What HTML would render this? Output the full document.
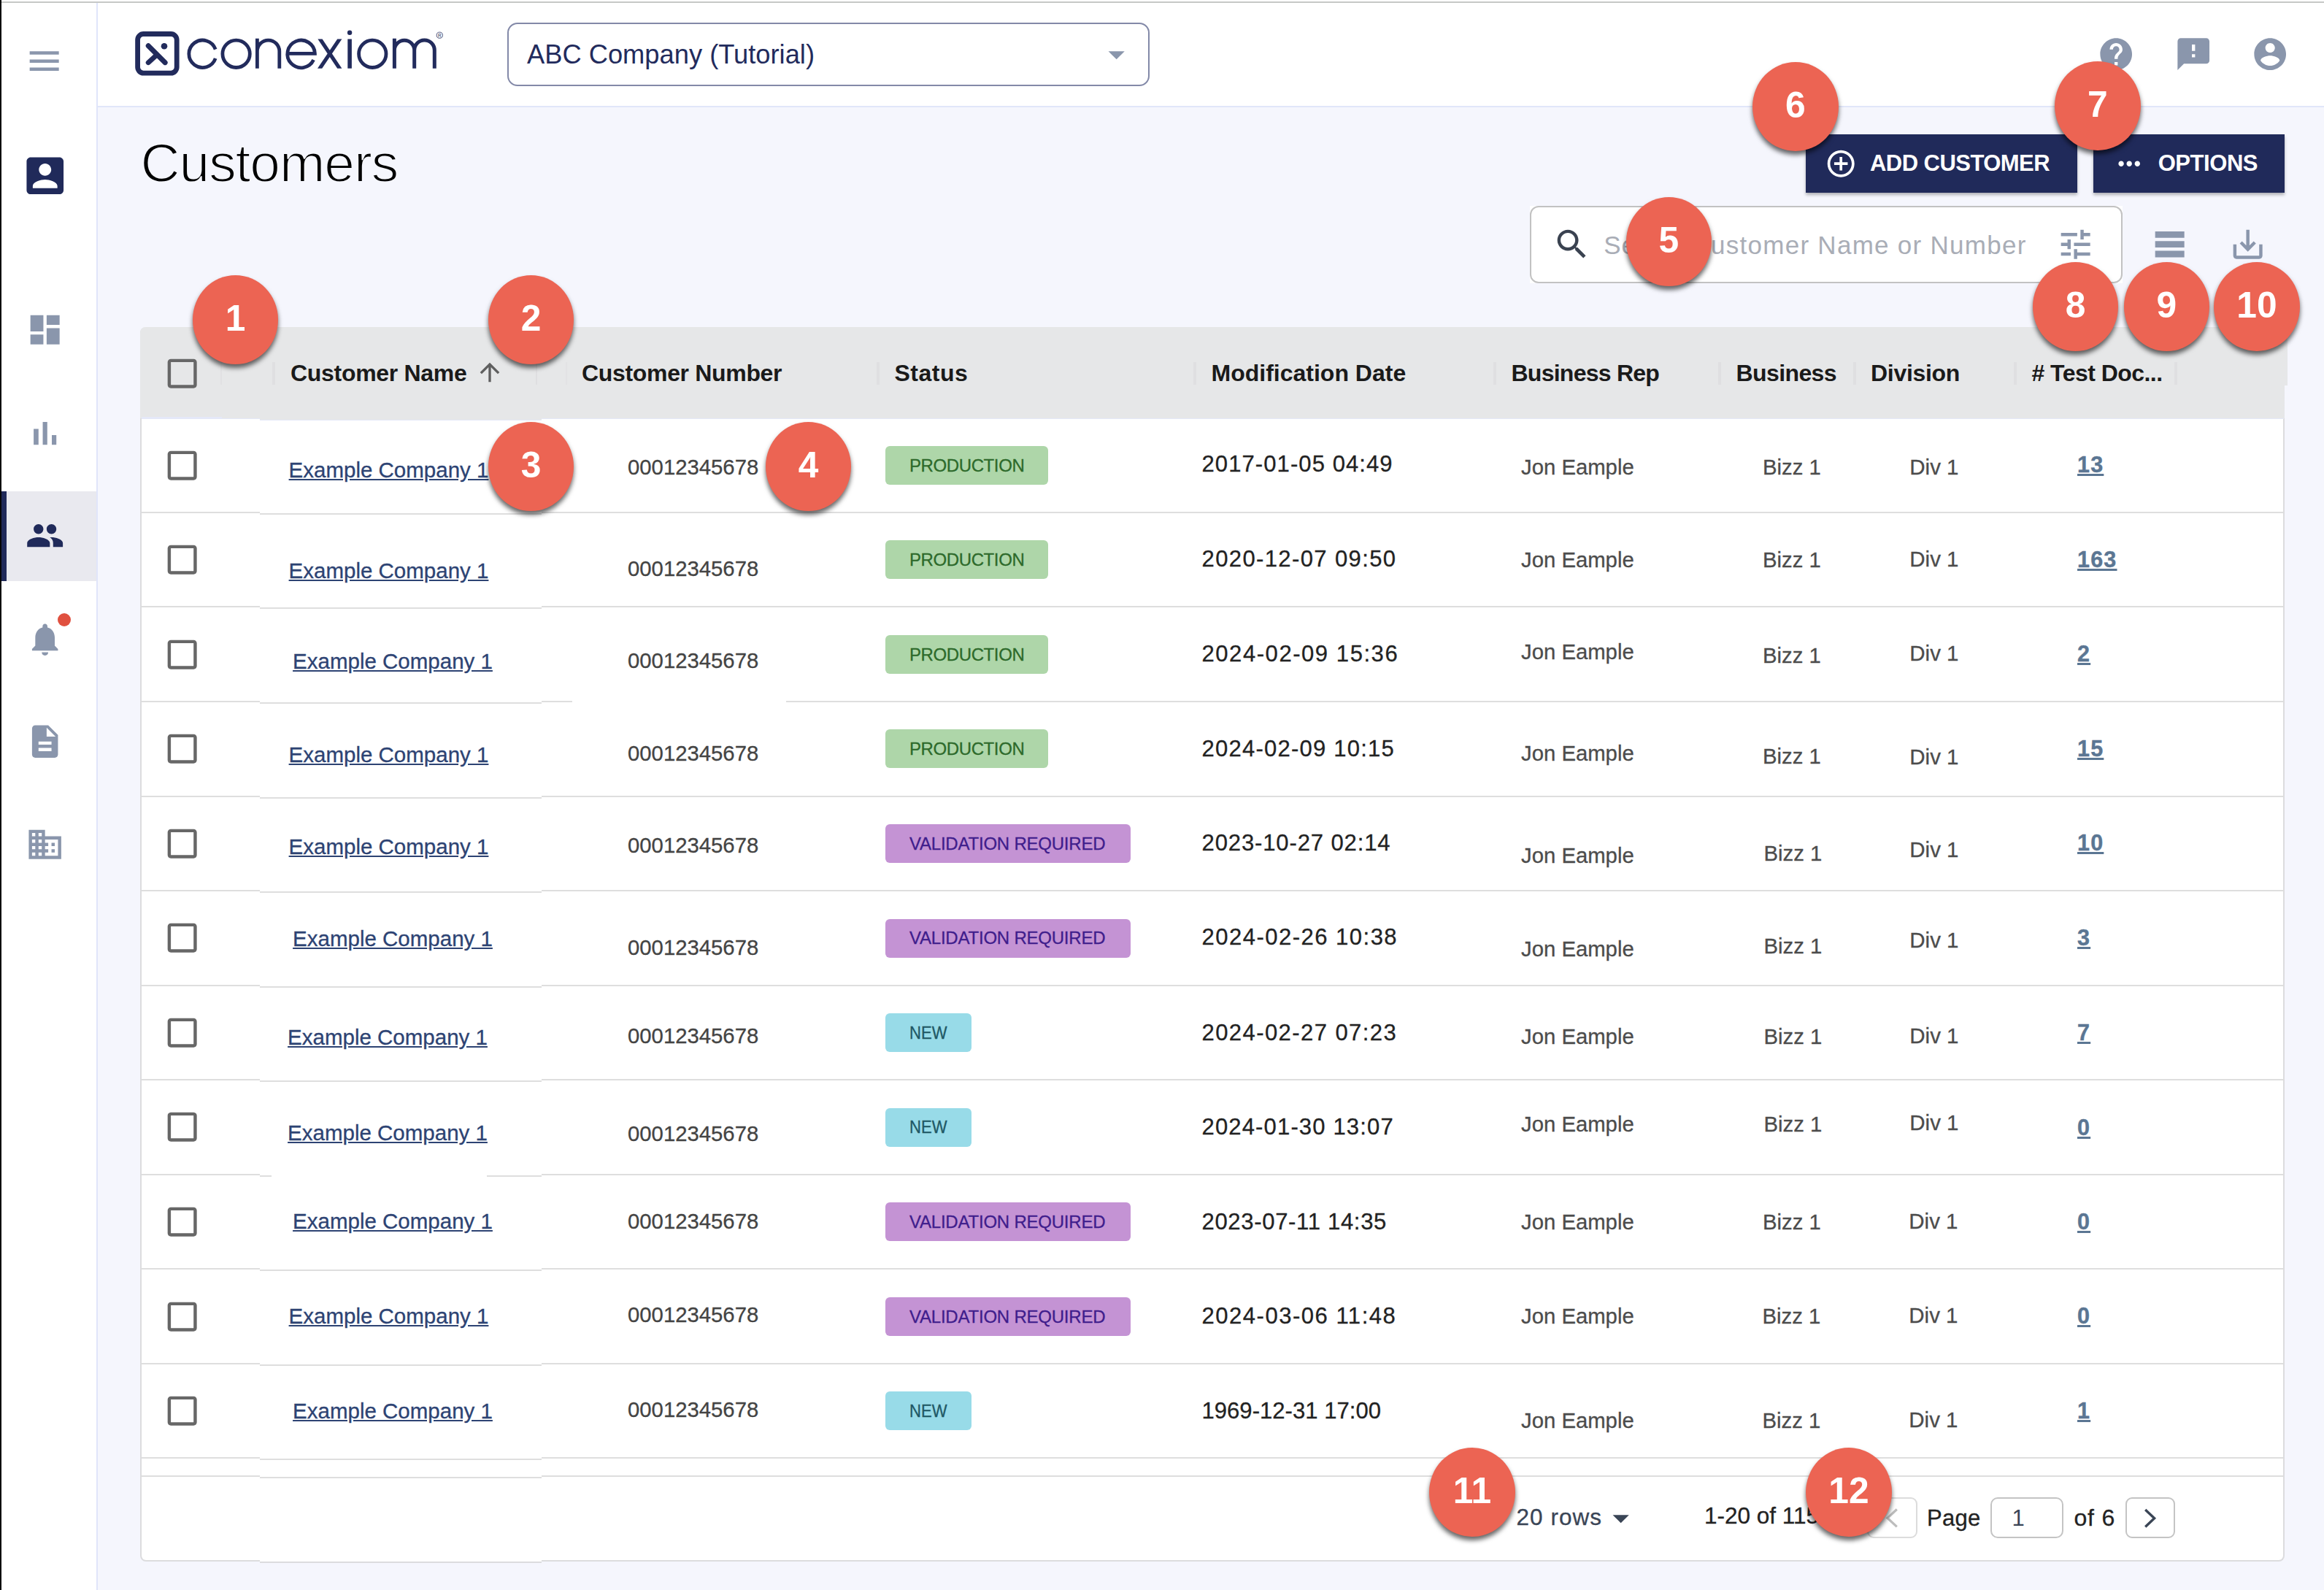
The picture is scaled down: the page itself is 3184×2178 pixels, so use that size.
<!DOCTYPE html>
<html><head><meta charset="utf-8"><title>Customers</title>
<style>
html,body{margin:0;padding:0}
body{width:3184px;height:2178px;position:relative;overflow:hidden;background:#f5f6fd;font-family:"Liberation Sans",sans-serif}
.a{position:absolute;display:block}
.t{position:absolute;white-space:nowrap;line-height:1}
.u{text-decoration:underline}
.c{position:absolute;width:117.6px;height:122px;border-radius:50%;background:#ec6453;box-shadow:0 5px 6px rgba(0,0,0,.6);color:#fff;font-weight:bold;font-size:49.7px;line-height:118px;text-align:center}
.bd{position:absolute;height:53px;border-radius:6px}
</style></head><body>

<div class="a" style="left:0.0px;top:0.0px;width:3184.0px;height:147.0px;background:#fff"></div>
<div class="a" style="left:134.0px;top:145.0px;width:3050.0px;height:2.0px;background:#e1e6f9"></div>
<div class="a" style="left:0.0px;top:0.0px;width:134.0px;height:2178.0px;background:#fff"></div>
<div class="a" style="left:132.1px;top:4.0px;width:1.8px;height:2174.0px;background:#e0e5fa"></div>
<div class="a" style="left:0.0px;top:2.1px;width:3184.0px;height:1.9px;background:#c6c8c6"></div>
<div class="a" style="left:0.0px;top:0.0px;width:2.0px;height:2178.0px;background:#050505"></div>
<svg class="a" style="left:34.3px;top:56.8px" width="53.33" height="53.33" viewBox="0 0 24 24"><path fill="#8a96ac" d="M3 18h18v-2H3v2zm0-5h18v-2H3v2zm0-7v2h18V6H3z"/></svg>
<svg class="a" style="left:27.7px;top:207.3px" width="67.5" height="67.5" viewBox="0 0 24 24"><path fill="#202a5a" d="M3 5v14c0 1.1.89 2 2 2h14c1.1 0 2-.9 2-2V5c0-1.1-.9-2-2-2H5c-1.11 0-2 .9-2 2zm12 4c0 1.66-1.34 3-3 3s-3-1.34-3-3 1.34-3 3-3 3 1.34 3 3zm-9 8c0-2 4-3.1 6-3.1s6 1.1 6 3.1v1H6v-1z"/></svg>
<svg class="a" style="left:34.5px;top:425.3px" width="53.33" height="53.33" viewBox="0 0 24 24"><path fill="#8a96ac" d="M3 13h8V3H3v10zm0 8h8v-6H3v6zm10 0h8V11h-8v10zm0-18v6h8V3h-8z"/></svg>
<svg class="a" style="left:34.7px;top:566.8px" width="53.33" height="53.33" viewBox="0 0 24 24"><path fill="#8a96ac" d="M5 9.2h3V19H5zM10.6 5h2.8v14h-2.8zm5.6 8H19v6h-2.8z"/></svg>
<div class="a" style="left:2.0px;top:673.0px;width:130.0px;height:123.0px;background:#e9e9ef"></div>
<div class="a" style="left:2.0px;top:673.0px;width:7.0px;height:123.0px;background:#202a5a"></div>
<svg class="a" style="left:34.6px;top:707.1px" width="53.33" height="53.33" viewBox="0 0 24 24"><path fill="#202a5a" d="M16 11c1.66 0 2.99-1.34 2.99-3S17.66 5 16 5c-1.66 0-3 1.34-3 3s1.34 3 3 3zm-8 0c1.66 0 2.99-1.34 2.99-3S9.66 5 8 5C6.34 5 5 6.34 5 8s1.34 3 3 3zm0 2c-2.33 0-7 1.17-7 3.5V19h14v-2.5c0-2.33-4.67-3.5-7-3.5zm8 0c-.29 0-.62.02-.97.05 1.16.84 1.97 1.97 1.97 3.45V19h6v-2.5c0-2.33-4.67-3.5-7-3.5z"/></svg>
<svg class="a" style="left:34.7px;top:849.0px" width="53.33" height="53.33" viewBox="0 0 24 24"><path fill="#8a96ac" d="M12 22c1.1 0 2-.9 2-2h-4c0 1.1.89 2 2 2zm6-6v-5c0-3.07-1.64-5.64-4.5-6.32V4c0-.83-.67-1.5-1.5-1.5s-1.5.67-1.5 1.5v.68C7.63 5.36 6 7.92 6 11v5l-2 2v1h16v-1l-2-2z"/></svg>
<div class="a" style="left:79.0px;top:840.0px;width:18.0px;height:18.0px;background:#e0503f;border-radius:50%"></div>
<svg class="a" style="left:34.9px;top:988.6px" width="53.33" height="53.33" viewBox="0 0 24 24"><path fill="#8a96ac" d="M14 2H6c-1.1 0-1.99.9-1.99 2L4 20c0 1.1.89 2 1.99 2H18c1.1 0 2-.9 2-2V8l-6-6zm2 16H8v-2h8v2zm0-4H8v-2h8v2zm-3-5V3.5L18.5 9H13z"/></svg>
<svg class="a" style="left:34.8px;top:1129.8px" width="53.33" height="53.33" viewBox="0 0 24 24"><path fill="#8a96ac" d="M12 7V3H2v18h20V7H12zM6 19H4v-2h2v2zm0-4H4v-2h2v2zm0-4H4V9h2v2zm0-4H4V5h2v2zm4 12H8v-2h2v2zm0-4H8v-2h2v2zm0-4H8V9h2v2zm0-4H8V5h2v2zm10 12h-8v-2h2v-2h-2v-2h2v-2h-2V9h8v10zm-2-8h-2v2h2v-2zm0 4h-2v2h2v-2z"/></svg>
<svg class="a" style="left:170px;top:25px" width="460" height="100" viewBox="170 25 460 100" fill="none" stroke="#222b5c">
<rect x="188.6" y="46.5" width="53.6" height="53.6" rx="8" stroke-width="6.8"/>
<path d="M203.2 62.7L226.2 85.7M203.2 85.7L213.6 76.3" stroke-width="6.9" stroke-linecap="round"/>
<circle cx="225" cy="63.3" r="4.3" fill="#222b5c" stroke="none"/>
<g stroke-width="4.8">
<path d="M295.2 67.6A18.7 18.7 0 1 0 295.2 80"/>
<circle cx="323.6" cy="73.8" r="18.7"/>
<path d="M352.4 93.7V52.7M352.4 70.3A15.2 15.2 0 0 1 382.8 70.3V93.7"/>
<path d="M393.8 73.3H431.4A18.8 18.8 0 1 0 429.6 82"/>
<path d="M435.4 53.5H441.6L468.4 93.7H462.2ZM462.2 53.5H468.4L441.2 93.7H435Z" fill="#222b5c" stroke="none"/>
<path d="M479.1 53.5V93.7" stroke-width="5.6"/>
<circle cx="510.3" cy="73.8" r="18.7"/>
<path d="M540.4 93.7V52.7M540.4 68.8A13.65 13.65 0 0 1 567.7 68.8V93.7M567.7 68.8A13.8 13.8 0 0 1 595.3 68.8V93.7" stroke-width="5"/>
</g>
<circle cx="479.1" cy="44.8" r="3.2" fill="#222b5c" stroke="none"/>
<circle cx="602.3" cy="48.2" r="4.1" stroke-width="0.8"/>
<text x="602.3" y="50.6" font-family="Liberation Sans" font-size="6.5" text-anchor="middle" fill="#222b5c" stroke="none">R</text>
</svg>
<div class="a" style="left:695.0px;top:31.0px;width:880.0px;height:87.0px;border:2px solid #8389a8;border-radius:14px;box-sizing:border-box;background:#fff"></div>
<div class="t " style="left:722.0px;top:56.8px;font-size:36.3px;color:#222b5c;font-weight:normal;">ABC Company (Tutorial)</div>
<svg class="a" style="left:1502.6px;top:47.8px" width="53.33" height="53.33" viewBox="0 0 24 24"><path fill="#8a96ac" d="M7 10l5 5 5-5z"/></svg>
<svg class="a" style="left:2873.3px;top:48.0px" width="52.4" height="52.4" viewBox="0 0 24 24"><path fill="#8a96ac" d="M12 2C6.48 2 2 6.48 2 12s4.48 10 10 10 10-4.48 10-10S17.52 2 12 2zm1 17h-2v-2h2v2zm2.07-7.75l-.9.92C13.45 12.9 13 13.5 13 15h-2v-.5c0-1.1.45-2.1 1.17-2.83l1.24-1.26c.37-.36.59-.86.59-1.41 0-1.1-.9-2-2-2s-2 .9-2 2H8c0-2.21 1.79-4 4-4s4 1.79 4 4c0 .88-.36 1.68-.93 2.25z"/></svg>
<svg class="a" style="left:2979.3px;top:48.0px" width="52.4" height="52.4" viewBox="0 0 24 24"><path fill="#8a96ac" d="M20 2H4c-1.1 0-1.99.9-1.99 2L2 22l4-4h14c1.1 0 2-.9 2-2V4c0-1.1-.9-2-2-2zm-7 12h-2v-2h2v2zm0-4h-2V6h2v4z"/></svg>
<svg class="a" style="left:3084.2px;top:48.0px" width="52.4" height="52.4" viewBox="0 0 24 24"><path fill="#8a96ac" d="M12 2C6.48 2 2 6.48 2 12s4.48 10 10 10 10-4.48 10-10S17.52 2 12 2zm0 3c1.66 0 3 1.34 3 3s-1.34 3-3 3-3-1.34-3-3 1.34-3 3-3zm0 14.2c-2.5 0-4.71-1.28-6-3.22.03-1.99 4-3.08 6-3.08 1.99 0 5.97 1.09 6 3.08-1.29 1.94-3.5 3.22-6 3.22z"/></svg>
<div class="t " style="left:192.5px;top:186.1px;font-size:75px;color:#000;font-weight:normal;letter-spacing:-1.1px;-webkit-text-stroke:1.9px #f5f6fd">Customers</div>
<div class="a" style="left:2474.0px;top:184.0px;width:372.0px;height:79.5px;background:#202a5a;box-shadow:0 3px 4px rgba(0,0,0,.28)"></div>
<svg class="a" style="left:2499.7px;top:202.2px" width="44.4" height="44.4" viewBox="0 0 24 24"><path fill="#fff" d="M13 7h-2v4H7v2h4v4h2v-4h4v-2h-4V7zm-1-5C6.48 2 2 6.48 2 12s4.48 10 10 10 10-4.48 10-10S17.52 2 12 2zm0 18c-4.41 0-8-3.59-8-8s3.59-8 8-8 8 3.59 8 8-3.59 8-8 8z"/></svg>
<div class="t " style="left:2562.0px;top:208.2px;font-size:31px;color:#fff;font-weight:bold;letter-spacing:-.55px">ADD CUSTOMER</div>
<div class="a" style="left:2868.0px;top:184.0px;width:262.0px;height:79.5px;background:#202a5a;box-shadow:0 3px 4px rgba(0,0,0,.28)"></div>
<svg class="a" style="left:2894.8px;top:202.1px" width="44.4" height="44.4" viewBox="0 0 24 24"><path fill="#fff" d="M6 10c-1.1 0-2 .9-2 2s.9 2 2 2 2-.9 2-2-.9-2-2-2zm12 0c-1.1 0-2 .9-2 2s.9 2 2 2 2-.9 2-2-.9-2-2-2zm-6 0c-1.1 0-2 .9-2 2s.9 2 2 2 2-.9 2-2-.9-2-2-2z"/></svg>
<div class="t " style="left:2956.7px;top:208.2px;font-size:31px;color:#fff;font-weight:bold;letter-spacing:-.45px">OPTIONS</div>
<div class="a" style="left:2096.0px;top:282.0px;width:811.5px;height:105.5px;background:#fff"></div>
<div class="a" style="left:2096.0px;top:282.0px;width:811.5px;height:105.5px;border:2px solid #c2c2c2;border-radius:12px;box-sizing:border-box"></div>
<svg class="a" style="left:2127.0px;top:307.8px" width="53.33" height="53.33" viewBox="0 0 24 24"><path fill="#3a4250" d="M15.5 14h-.79l-.28-.27C15.41 12.59 16 11.11 16 9.5 16 5.91 13.09 3 9.5 3S3 5.91 3 9.5 5.91 16 9.5 16c1.61 0 3.09-.59 4.23-1.57l.27.28v.79l5 4.99L20.49 19l-4.99-5zm-6 0C7.01 14 5 11.99 5 9.5S7.01 5 9.5 5 14 7.01 14 9.5 11.99 14 9.5 14z"/></svg>
<div class="t " style="left:2197.3px;top:317.6px;font-size:35px;color:#a9adb6;font-weight:normal;letter-spacing:.9px">Search</div>
<div class="t " style="left:2317.4px;top:317.6px;font-size:35px;color:#a9adb6;font-weight:normal;letter-spacing:1.28px">Customer Name or Number</div>
<svg class="a" style="left:2816.7px;top:307.6px" width="53.33" height="53.33" viewBox="0 0 24 24"><path fill="#8a96ac" d="M3 17v2h6v-2H3zM3 5v2h10V5H3zm10 16v-2h8v-2h-8v-2h-2v6h2zM7 9v2H3v2h4v2h2V9H7zm14 4v-2H11v2h10zm-6-4h2V7h4V5h-4V3h-2v6z"/></svg>
<svg class="a" style="left:2946.3px;top:308.0px" width="53.33" height="53.33" viewBox="0 0 24 24"><path fill="#8a96ac" d="M21 8H3V4h18v4zm0 2H3v4h18v-4zm0 6H3v4h18v-4z"/></svg>
<svg class="a" style="left:3053.0px;top:307.6px" width="53.33" height="53.33" viewBox="0 0 24 24"><path fill="#8a96ac" d="M19 12v7H5v-7H3v7c0 1.1.9 2 2 2h14c1.1 0 2-.9 2-2v-7h-2zm-6 .67l2.59-2.58L17 11.5l-5 5-5-5 1.41-1.41L11 12.67V3h2z"/></svg>
<div class="a" style="left:192.0px;top:448.0px;width:2938.0px;height:1691.0px;background:#fff;border-radius:8px;border:2px solid #dcdcde;border-top:none;box-sizing:border-box"></div>
<div class="a" style="left:192.0px;top:448.0px;width:2942.0px;height:80.0px;background:#e6e7e8;border-radius:8px 0 0 0"></div>
<div class="a" style="left:192.0px;top:518.0px;width:2938.0px;height:54.5px;background:#e6e7e8"></div>
<div class="a" style="left:194.0px;top:572.5px;width:2935.0px;height:1.5px;background:#e4e8f8"></div>
<div class="a" style="left:194.0px;top:570.6px;width:110.0px;height:3.4px;background:#e4e8f8"></div>
<div class="a" style="left:302.0px;top:496.0px;width:2.0px;height:31.0px;background:#e1e1e3"></div>
<div class="a" style="left:373.0px;top:496.0px;width:4.0px;height:31.0px;background:#dfdfe1"></div>
<div class="a" style="left:733.8px;top:496.0px;width:2.5px;height:31.0px;background:#dfdfe1"></div>
<div class="a" style="left:775.2px;top:496.0px;width:1.5px;height:31.0px;background:#e2e2e4"></div>
<div class="a" style="left:1200.5px;top:496.0px;width:4.0px;height:31.0px;background:#dfdfe1"></div>
<div class="a" style="left:1634.5px;top:496.0px;width:4.0px;height:31.0px;background:#dfdfe1"></div>
<div class="a" style="left:2046.0px;top:496.0px;width:4.0px;height:31.0px;background:#dfdfe1"></div>
<div class="a" style="left:2354.0px;top:496.0px;width:4.0px;height:31.0px;background:#dfdfe1"></div>
<div class="a" style="left:2539.0px;top:496.0px;width:4.0px;height:31.0px;background:#dfdfe1"></div>
<div class="a" style="left:2759.0px;top:496.0px;width:4.0px;height:31.0px;background:#dfdfe1"></div>
<div class="a" style="left:2978.5px;top:496.0px;width:4.0px;height:31.0px;background:#dfdfe1"></div>
<div class="a" style="left:356.0px;top:572.5px;width:386.0px;height:2.0px;background:#e6e7e8"></div>
<div class="a" style="left:356.0px;top:574.5px;width:386.0px;height:1.5px;background:#e4e8f8"></div>
<svg class="a" style="left:222.7px;top:485.0px" width="53.33" height="53.33" viewBox="0 0 24 24"><path fill="#676767" d="M19 5v14H5V5h14m0-2H5c-1.1 0-2 .9-2 2v14c0 1.1.9 2 2 2h14c1.1 0 2-.9 2-2V5c0-1.1-.9-2-2-2z"/></svg>
<div class="t " style="left:398.0px;top:494.9px;font-size:32px;color:#1a1a1a;font-weight:bold;letter-spacing:-0.3px">Customer Name</div>
<svg class="a" style="left:650.7px;top:490.3px" width="40" height="40" viewBox="0 0 24 24"><path fill="#5f5f5f" d="M4 12l1.41 1.41L11 7.83V20h2V7.83l5.58 5.59L20 12l-8-8-8 8z"/></svg>
<div class="t " style="left:797.0px;top:494.9px;font-size:32px;color:#1a1a1a;font-weight:bold;letter-spacing:-0.33px">Customer Number</div>
<div class="t " style="left:1225.5px;top:494.9px;font-size:32px;color:#1a1a1a;font-weight:bold;letter-spacing:0.5px">Status</div>
<div class="t " style="left:1659.5px;top:494.9px;font-size:32px;color:#1a1a1a;font-weight:bold;letter-spacing:0px">Modification Date</div>
<div class="t " style="left:2070.5px;top:494.9px;font-size:32px;color:#1a1a1a;font-weight:bold;letter-spacing:-0.75px">Business Rep</div>
<div class="t " style="left:2378.5px;top:494.9px;font-size:32px;color:#1a1a1a;font-weight:bold;letter-spacing:-0.6px">Business</div>
<div class="t " style="left:2563.0px;top:494.9px;font-size:32px;color:#1a1a1a;font-weight:bold;letter-spacing:-0.3px">Division</div>
<div class="t " style="left:2783.5px;top:494.9px;font-size:32px;color:#1a1a1a;font-weight:bold;letter-spacing:-0.55px"># Test Doc...</div>
<div class="a" style="left:194.0px;top:700.9px;width:162.0px;height:2.1px;background:#dedede"></div>
<div class="a" style="left:356.0px;top:702.9px;width:386.0px;height:2.1px;background:#dedede"></div>
<div class="a" style="left:742.0px;top:700.9px;width:2386.0px;height:2.1px;background:#dedede"></div>
<svg class="a" style="left:222.7px;top:610.5px" width="53.33" height="53.33" viewBox="0 0 24 24"><path fill="#676767" d="M19 5v14H5V5h14m0-2H5c-1.1 0-2 .9-2 2v14c0 1.1.9 2 2 2h14c1.1 0 2-.9 2-2V5c0-1.1-.9-2-2-2z"/></svg>
<div class="t u" style="left:395.6px;top:628.6px;font-size:29.5px;color:#2d4373;font-weight:normal;-webkit-text-stroke:.3px #2d4373">Example Company 1</div>
<div class="t " style="left:860.0px;top:625.1px;font-size:29.3px;color:#444;font-weight:normal;-webkit-text-stroke:.3px #444">00012345678</div>
<div class="bd" style="left:1213px;top:610.7px;width:223px;background:#aed6a9"></div>
<div class="t " style="left:1246.0px;top:625.6px;font-size:24px;color:#2d6a2b;font-weight:normal;letter-spacing:-0.4px;-webkit-text-stroke:.3px #2d6a2b">PRODUCTION</div>
<div class="t " style="left:1646.5px;top:620.3px;font-size:31px;color:#222;font-weight:normal;letter-spacing:1.09px;-webkit-text-stroke:.3px #222">2017-01-05 04:49</div>
<div class="t " style="left:2084.0px;top:625.0px;font-size:29.3px;color:#4c4c4c;font-weight:normal;-webkit-text-stroke:.3px #4c4c4c">Jon Eample</div>
<div class="t " style="left:2415.0px;top:625.0px;font-size:29.3px;color:#4c4c4c;font-weight:normal;-webkit-text-stroke:.3px #4c4c4c">Bizz 1</div>
<div class="t " style="left:2616.3px;top:624.8px;font-size:29.5px;color:#4c4c4c;font-weight:normal;-webkit-text-stroke:.3px #4c4c4c">Div 1</div>
<div class="t u" style="left:2846.0px;top:620.8px;font-size:30.5px;color:#5b7693;font-weight:bold;letter-spacing:1.2px;-webkit-text-stroke:.4px #5b7693;text-decoration-thickness:3.2px;text-underline-offset:1.6px">13</div>
<div class="a" style="left:194.0px;top:830.4px;width:162.0px;height:2.1px;background:#dedede"></div>
<div class="a" style="left:356.0px;top:832.4px;width:386.0px;height:2.1px;background:#dedede"></div>
<div class="a" style="left:742.0px;top:830.4px;width:2386.0px;height:2.1px;background:#dedede"></div>
<svg class="a" style="left:222.7px;top:740.1px" width="53.33" height="53.33" viewBox="0 0 24 24"><path fill="#676767" d="M19 5v14H5V5h14m0-2H5c-1.1 0-2 .9-2 2v14c0 1.1.9 2 2 2h14c1.1 0 2-.9 2-2V5c0-1.1-.9-2-2-2z"/></svg>
<div class="t u" style="left:395.6px;top:767.1px;font-size:29.5px;color:#2d4373;font-weight:normal;-webkit-text-stroke:.3px #2d4373">Example Company 1</div>
<div class="t " style="left:860.0px;top:764.1px;font-size:29.3px;color:#444;font-weight:normal;-webkit-text-stroke:.3px #444">00012345678</div>
<div class="bd" style="left:1213px;top:740.2px;width:223px;background:#aed6a9"></div>
<div class="t " style="left:1246.0px;top:755.1px;font-size:24px;color:#2d6a2b;font-weight:normal;letter-spacing:-0.4px;-webkit-text-stroke:.3px #2d6a2b">PRODUCTION</div>
<div class="t " style="left:1646.5px;top:750.3px;font-size:31px;color:#222;font-weight:normal;letter-spacing:1.39px;-webkit-text-stroke:.3px #222">2020-12-07 09:50</div>
<div class="t " style="left:2084.0px;top:751.5px;font-size:29.3px;color:#4c4c4c;font-weight:normal;-webkit-text-stroke:.3px #4c4c4c">Jon Eample</div>
<div class="t " style="left:2415.0px;top:751.5px;font-size:29.3px;color:#4c4c4c;font-weight:normal;-webkit-text-stroke:.3px #4c4c4c">Bizz 1</div>
<div class="t " style="left:2616.3px;top:751.3px;font-size:29.5px;color:#4c4c4c;font-weight:normal;-webkit-text-stroke:.3px #4c4c4c">Div 1</div>
<div class="t u" style="left:2846.0px;top:750.8px;font-size:30.5px;color:#5b7693;font-weight:bold;letter-spacing:1.2px;-webkit-text-stroke:.4px #5b7693;text-decoration-thickness:3.2px;text-underline-offset:1.6px">163</div>
<div class="a" style="left:194.0px;top:960.0px;width:162.0px;height:2.1px;background:#dedede"></div>
<div class="a" style="left:356.0px;top:962.0px;width:386.0px;height:2.1px;background:#dedede"></div>
<div class="a" style="left:742.0px;top:960.0px;width:2386.0px;height:2.1px;background:#dedede"></div>
<svg class="a" style="left:222.7px;top:869.6px" width="53.33" height="53.33" viewBox="0 0 24 24"><path fill="#676767" d="M19 5v14H5V5h14m0-2H5c-1.1 0-2 .9-2 2v14c0 1.1.9 2 2 2h14c1.1 0 2-.9 2-2V5c0-1.1-.9-2-2-2z"/></svg>
<div class="t u" style="left:401.1px;top:891.1px;font-size:29.5px;color:#2d4373;font-weight:normal;-webkit-text-stroke:.3px #2d4373">Example Company 1</div>
<div class="t " style="left:860.0px;top:890.1px;font-size:29.3px;color:#444;font-weight:normal;-webkit-text-stroke:.3px #444">00012345678</div>
<div class="bd" style="left:1213px;top:869.8px;width:223px;background:#aed6a9"></div>
<div class="t " style="left:1246.0px;top:884.7px;font-size:24px;color:#2d6a2b;font-weight:normal;letter-spacing:-0.4px;-webkit-text-stroke:.3px #2d6a2b">PRODUCTION</div>
<div class="t " style="left:1646.5px;top:879.8px;font-size:31px;color:#222;font-weight:normal;letter-spacing:1.56px;-webkit-text-stroke:.3px #222">2024-02-09 15:36</div>
<div class="t " style="left:2084.0px;top:877.5px;font-size:29.3px;color:#4c4c4c;font-weight:normal;-webkit-text-stroke:.3px #4c4c4c">Jon Eample</div>
<div class="t " style="left:2415.0px;top:882.5px;font-size:29.3px;color:#4c4c4c;font-weight:normal;-webkit-text-stroke:.3px #4c4c4c">Bizz 1</div>
<div class="t " style="left:2616.3px;top:879.8px;font-size:29.5px;color:#4c4c4c;font-weight:normal;-webkit-text-stroke:.3px #4c4c4c">Div 1</div>
<div class="t u" style="left:2846.0px;top:880.3px;font-size:30.5px;color:#5b7693;font-weight:bold;letter-spacing:1.2px;-webkit-text-stroke:.4px #5b7693;text-decoration-thickness:3.2px;text-underline-offset:1.6px">2</div>
<div class="a" style="left:194.0px;top:1089.5px;width:162.0px;height:2.1px;background:#dedede"></div>
<div class="a" style="left:356.0px;top:1091.5px;width:386.0px;height:2.1px;background:#dedede"></div>
<div class="a" style="left:742.0px;top:1089.5px;width:2386.0px;height:2.1px;background:#dedede"></div>
<svg class="a" style="left:222.7px;top:999.2px" width="53.33" height="53.33" viewBox="0 0 24 24"><path fill="#676767" d="M19 5v14H5V5h14m0-2H5c-1.1 0-2 .9-2 2v14c0 1.1.9 2 2 2h14c1.1 0 2-.9 2-2V5c0-1.1-.9-2-2-2z"/></svg>
<div class="t u" style="left:395.6px;top:1018.6px;font-size:29.5px;color:#2d4373;font-weight:normal;-webkit-text-stroke:.3px #2d4373">Example Company 1</div>
<div class="t " style="left:860.0px;top:1016.6px;font-size:29.3px;color:#444;font-weight:normal;-webkit-text-stroke:.3px #444">00012345678</div>
<div class="bd" style="left:1213px;top:999.3px;width:223px;background:#aed6a9"></div>
<div class="t " style="left:1246.0px;top:1014.2px;font-size:24px;color:#2d6a2b;font-weight:normal;letter-spacing:-0.4px;-webkit-text-stroke:.3px #2d6a2b">PRODUCTION</div>
<div class="t " style="left:1646.5px;top:1009.8px;font-size:31px;color:#222;font-weight:normal;letter-spacing:1.23px;-webkit-text-stroke:.3px #222">2024-02-09 10:15</div>
<div class="t " style="left:2084.0px;top:1016.5px;font-size:29.3px;color:#4c4c4c;font-weight:normal;-webkit-text-stroke:.3px #4c4c4c">Jon Eample</div>
<div class="t " style="left:2415.0px;top:1020.5px;font-size:29.3px;color:#4c4c4c;font-weight:normal;-webkit-text-stroke:.3px #4c4c4c">Bizz 1</div>
<div class="t " style="left:2616.3px;top:1022.3px;font-size:29.5px;color:#4c4c4c;font-weight:normal;-webkit-text-stroke:.3px #4c4c4c">Div 1</div>
<div class="t u" style="left:2846.0px;top:1010.3px;font-size:30.5px;color:#5b7693;font-weight:bold;letter-spacing:1.2px;-webkit-text-stroke:.4px #5b7693;text-decoration-thickness:3.2px;text-underline-offset:1.6px">15</div>
<div class="a" style="left:194.0px;top:1219.0px;width:162.0px;height:2.1px;background:#dedede"></div>
<div class="a" style="left:356.0px;top:1221.0px;width:386.0px;height:2.1px;background:#dedede"></div>
<div class="a" style="left:742.0px;top:1219.0px;width:2386.0px;height:2.1px;background:#dedede"></div>
<svg class="a" style="left:222.7px;top:1128.7px" width="53.33" height="53.33" viewBox="0 0 24 24"><path fill="#676767" d="M19 5v14H5V5h14m0-2H5c-1.1 0-2 .9-2 2v14c0 1.1.9 2 2 2h14c1.1 0 2-.9 2-2V5c0-1.1-.9-2-2-2z"/></svg>
<div class="t u" style="left:395.6px;top:1144.6px;font-size:29.5px;color:#2d4373;font-weight:normal;-webkit-text-stroke:.3px #2d4373">Example Company 1</div>
<div class="t " style="left:860.0px;top:1142.6px;font-size:29.3px;color:#444;font-weight:normal;-webkit-text-stroke:.3px #444">00012345678</div>
<div class="bd" style="left:1213px;top:1128.9px;width:336px;background:#c493d4"></div>
<div class="t " style="left:1246.0px;top:1143.8px;font-size:24px;color:#3f1d8c;font-weight:normal;letter-spacing:-0.22px;-webkit-text-stroke:.3px #3f1d8c">VALIDATION REQUIRED</div>
<div class="t " style="left:1646.5px;top:1138.8px;font-size:31px;color:#222;font-weight:normal;letter-spacing:0.89px;-webkit-text-stroke:.3px #222">2023-10-27 02:14</div>
<div class="t " style="left:2084.0px;top:1156.5px;font-size:29.3px;color:#4c4c4c;font-weight:normal;-webkit-text-stroke:.3px #4c4c4c">Jon Eample</div>
<div class="t " style="left:2416.5px;top:1154.0px;font-size:29.3px;color:#4c4c4c;font-weight:normal;-webkit-text-stroke:.3px #4c4c4c">Bizz 1</div>
<div class="t " style="left:2616.3px;top:1149.3px;font-size:29.5px;color:#4c4c4c;font-weight:normal;-webkit-text-stroke:.3px #4c4c4c">Div 1</div>
<div class="t u" style="left:2846.0px;top:1139.3px;font-size:30.5px;color:#5b7693;font-weight:bold;letter-spacing:1.2px;-webkit-text-stroke:.4px #5b7693;text-decoration-thickness:3.2px;text-underline-offset:1.6px">10</div>
<div class="a" style="left:194.0px;top:1348.6px;width:162.0px;height:2.1px;background:#dedede"></div>
<div class="a" style="left:356.0px;top:1350.6px;width:386.0px;height:2.1px;background:#dedede"></div>
<div class="a" style="left:742.0px;top:1348.6px;width:2386.0px;height:2.1px;background:#dedede"></div>
<svg class="a" style="left:222.7px;top:1258.3px" width="53.33" height="53.33" viewBox="0 0 24 24"><path fill="#676767" d="M19 5v14H5V5h14m0-2H5c-1.1 0-2 .9-2 2v14c0 1.1.9 2 2 2h14c1.1 0 2-.9 2-2V5c0-1.1-.9-2-2-2z"/></svg>
<div class="t u" style="left:401.1px;top:1270.6px;font-size:29.5px;color:#2d4373;font-weight:normal;-webkit-text-stroke:.3px #2d4373">Example Company 1</div>
<div class="t " style="left:860.0px;top:1282.6px;font-size:29.3px;color:#444;font-weight:normal;-webkit-text-stroke:.3px #444">00012345678</div>
<div class="bd" style="left:1213px;top:1258.5px;width:336px;background:#c493d4"></div>
<div class="t " style="left:1246.0px;top:1273.3px;font-size:24px;color:#3f1d8c;font-weight:normal;letter-spacing:-0.22px;-webkit-text-stroke:.3px #3f1d8c">VALIDATION REQUIRED</div>
<div class="t " style="left:1646.5px;top:1268.3px;font-size:31px;color:#222;font-weight:normal;letter-spacing:1.49px;-webkit-text-stroke:.3px #222">2024-02-26 10:38</div>
<div class="t " style="left:2084.0px;top:1284.5px;font-size:29.3px;color:#4c4c4c;font-weight:normal;-webkit-text-stroke:.3px #4c4c4c">Jon Eample</div>
<div class="t " style="left:2416.5px;top:1280.5px;font-size:29.3px;color:#4c4c4c;font-weight:normal;-webkit-text-stroke:.3px #4c4c4c">Bizz 1</div>
<div class="t " style="left:2616.3px;top:1273.3px;font-size:29.5px;color:#4c4c4c;font-weight:normal;-webkit-text-stroke:.3px #4c4c4c">Div 1</div>
<div class="t u" style="left:2846.0px;top:1268.8px;font-size:30.5px;color:#5b7693;font-weight:bold;letter-spacing:1.2px;-webkit-text-stroke:.4px #5b7693;text-decoration-thickness:3.2px;text-underline-offset:1.6px">3</div>
<div class="a" style="left:194.0px;top:1478.2px;width:162.0px;height:2.1px;background:#dedede"></div>
<div class="a" style="left:356.0px;top:1480.2px;width:386.0px;height:2.1px;background:#dedede"></div>
<div class="a" style="left:742.0px;top:1478.2px;width:2386.0px;height:2.1px;background:#dedede"></div>
<svg class="a" style="left:222.7px;top:1387.8px" width="53.33" height="53.33" viewBox="0 0 24 24"><path fill="#676767" d="M19 5v14H5V5h14m0-2H5c-1.1 0-2 .9-2 2v14c0 1.1.9 2 2 2h14c1.1 0 2-.9 2-2V5c0-1.1-.9-2-2-2z"/></svg>
<div class="t u" style="left:394.1px;top:1406.1px;font-size:29.5px;color:#2d4373;font-weight:normal;-webkit-text-stroke:.3px #2d4373">Example Company 1</div>
<div class="t " style="left:860.0px;top:1403.6px;font-size:29.3px;color:#444;font-weight:normal;-webkit-text-stroke:.3px #444">00012345678</div>
<div class="bd" style="left:1213px;top:1388.0px;width:118px;background:#98dbe8"></div>
<div class="t " style="left:1246.0px;top:1402.9px;font-size:24px;color:#1f5865;font-weight:normal;letter-spacing:0px;-webkit-text-stroke:.3px #1f5865;transform:scaleX(.92);transform-origin:0 0">NEW</div>
<div class="t " style="left:1646.5px;top:1398.8px;font-size:31px;color:#222;font-weight:normal;letter-spacing:1.43px;-webkit-text-stroke:.3px #222">2024-02-27 07:23</div>
<div class="t " style="left:2084.0px;top:1404.5px;font-size:29.3px;color:#4c4c4c;font-weight:normal;-webkit-text-stroke:.3px #4c4c4c">Jon Eample</div>
<div class="t " style="left:2416.5px;top:1404.5px;font-size:29.3px;color:#4c4c4c;font-weight:normal;-webkit-text-stroke:.3px #4c4c4c">Bizz 1</div>
<div class="t " style="left:2616.3px;top:1404.3px;font-size:29.5px;color:#4c4c4c;font-weight:normal;-webkit-text-stroke:.3px #4c4c4c">Div 1</div>
<div class="t u" style="left:2846.0px;top:1399.3px;font-size:30.5px;color:#5b7693;font-weight:bold;letter-spacing:1.2px;-webkit-text-stroke:.4px #5b7693;text-decoration-thickness:3.2px;text-underline-offset:1.6px">7</div>
<div class="a" style="left:194.0px;top:1607.7px;width:162.0px;height:2.1px;background:#dedede"></div>
<div class="a" style="left:356.0px;top:1609.7px;width:386.0px;height:2.1px;background:#dedede"></div>
<div class="a" style="left:742.0px;top:1607.7px;width:2386.0px;height:2.1px;background:#dedede"></div>
<svg class="a" style="left:222.7px;top:1517.4px" width="53.33" height="53.33" viewBox="0 0 24 24"><path fill="#676767" d="M19 5v14H5V5h14m0-2H5c-1.1 0-2 .9-2 2v14c0 1.1.9 2 2 2h14c1.1 0 2-.9 2-2V5c0-1.1-.9-2-2-2z"/></svg>
<div class="t u" style="left:394.1px;top:1536.6px;font-size:29.5px;color:#2d4373;font-weight:normal;-webkit-text-stroke:.3px #2d4373">Example Company 1</div>
<div class="t " style="left:860.0px;top:1537.6px;font-size:29.3px;color:#444;font-weight:normal;-webkit-text-stroke:.3px #444">00012345678</div>
<div class="bd" style="left:1213px;top:1517.5px;width:118px;background:#98dbe8"></div>
<div class="t " style="left:1246.0px;top:1532.4px;font-size:24px;color:#1f5865;font-weight:normal;letter-spacing:0px;-webkit-text-stroke:.3px #1f5865;transform:scaleX(.92);transform-origin:0 0">NEW</div>
<div class="t " style="left:1646.5px;top:1528.3px;font-size:31px;color:#222;font-weight:normal;letter-spacing:1.16px;-webkit-text-stroke:.3px #222">2024-01-30 13:07</div>
<div class="t " style="left:2084.0px;top:1524.5px;font-size:29.3px;color:#4c4c4c;font-weight:normal;-webkit-text-stroke:.3px #4c4c4c">Jon Eample</div>
<div class="t " style="left:2416.5px;top:1524.5px;font-size:29.3px;color:#4c4c4c;font-weight:normal;-webkit-text-stroke:.3px #4c4c4c">Bizz 1</div>
<div class="t " style="left:2616.3px;top:1523.3px;font-size:29.5px;color:#4c4c4c;font-weight:normal;-webkit-text-stroke:.3px #4c4c4c">Div 1</div>
<div class="t u" style="left:2846.0px;top:1528.8px;font-size:30.5px;color:#5b7693;font-weight:bold;letter-spacing:1.2px;-webkit-text-stroke:.4px #5b7693;text-decoration-thickness:3.2px;text-underline-offset:1.6px">0</div>
<div class="a" style="left:194.0px;top:1737.3px;width:162.0px;height:2.1px;background:#dedede"></div>
<div class="a" style="left:356.0px;top:1739.3px;width:386.0px;height:2.1px;background:#dedede"></div>
<div class="a" style="left:742.0px;top:1737.3px;width:2386.0px;height:2.1px;background:#dedede"></div>
<svg class="a" style="left:222.7px;top:1646.9px" width="53.33" height="53.33" viewBox="0 0 24 24"><path fill="#676767" d="M19 5v14H5V5h14m0-2H5c-1.1 0-2 .9-2 2v14c0 1.1.9 2 2 2h14c1.1 0 2-.9 2-2V5c0-1.1-.9-2-2-2z"/></svg>
<div class="t u" style="left:401.1px;top:1657.6px;font-size:29.5px;color:#2d4373;font-weight:normal;-webkit-text-stroke:.3px #2d4373">Example Company 1</div>
<div class="t " style="left:860.0px;top:1657.6px;font-size:29.3px;color:#444;font-weight:normal;-webkit-text-stroke:.3px #444">00012345678</div>
<div class="bd" style="left:1213px;top:1647.1px;width:336px;background:#c493d4"></div>
<div class="t " style="left:1246.0px;top:1662.0px;font-size:24px;color:#3f1d8c;font-weight:normal;letter-spacing:-0.22px;-webkit-text-stroke:.3px #3f1d8c">VALIDATION REQUIRED</div>
<div class="t " style="left:1646.5px;top:1657.8px;font-size:31px;color:#222;font-weight:normal;letter-spacing:0.69px;-webkit-text-stroke:.3px #222">2023-07-11 14:35</div>
<div class="t " style="left:2084.0px;top:1658.5px;font-size:29.3px;color:#4c4c4c;font-weight:normal;-webkit-text-stroke:.3px #4c4c4c">Jon Eample</div>
<div class="t " style="left:2415.0px;top:1658.5px;font-size:29.3px;color:#4c4c4c;font-weight:normal;-webkit-text-stroke:.3px #4c4c4c">Bizz 1</div>
<div class="t " style="left:2615.3px;top:1658.3px;font-size:29.5px;color:#4c4c4c;font-weight:normal;-webkit-text-stroke:.3px #4c4c4c">Div 1</div>
<div class="t u" style="left:2846.0px;top:1658.3px;font-size:30.5px;color:#5b7693;font-weight:bold;letter-spacing:1.2px;-webkit-text-stroke:.4px #5b7693;text-decoration-thickness:3.2px;text-underline-offset:1.6px">0</div>
<div class="a" style="left:194.0px;top:1866.8px;width:162.0px;height:2.1px;background:#dedede"></div>
<div class="a" style="left:356.0px;top:1868.8px;width:386.0px;height:2.1px;background:#dedede"></div>
<div class="a" style="left:742.0px;top:1866.8px;width:2386.0px;height:2.1px;background:#dedede"></div>
<svg class="a" style="left:222.7px;top:1776.5px" width="53.33" height="53.33" viewBox="0 0 24 24"><path fill="#676767" d="M19 5v14H5V5h14m0-2H5c-1.1 0-2 .9-2 2v14c0 1.1.9 2 2 2h14c1.1 0 2-.9 2-2V5c0-1.1-.9-2-2-2z"/></svg>
<div class="t u" style="left:395.6px;top:1788.1px;font-size:29.5px;color:#2d4373;font-weight:normal;-webkit-text-stroke:.3px #2d4373">Example Company 1</div>
<div class="t " style="left:860.0px;top:1786.1px;font-size:29.3px;color:#444;font-weight:normal;-webkit-text-stroke:.3px #444">00012345678</div>
<div class="bd" style="left:1213px;top:1776.6px;width:336px;background:#c493d4"></div>
<div class="t " style="left:1246.0px;top:1791.5px;font-size:24px;color:#3f1d8c;font-weight:normal;letter-spacing:-0.22px;-webkit-text-stroke:.3px #3f1d8c">VALIDATION REQUIRED</div>
<div class="t " style="left:1646.5px;top:1786.8px;font-size:31px;color:#222;font-weight:normal;letter-spacing:1.52px;-webkit-text-stroke:.3px #222">2024-03-06 11:48</div>
<div class="t " style="left:2084.0px;top:1787.5px;font-size:29.3px;color:#4c4c4c;font-weight:normal;-webkit-text-stroke:.3px #4c4c4c">Jon Eample</div>
<div class="t " style="left:2414.5px;top:1787.5px;font-size:29.3px;color:#4c4c4c;font-weight:normal;-webkit-text-stroke:.3px #4c4c4c">Bizz 1</div>
<div class="t " style="left:2615.3px;top:1787.3px;font-size:29.5px;color:#4c4c4c;font-weight:normal;-webkit-text-stroke:.3px #4c4c4c">Div 1</div>
<div class="t u" style="left:2846.0px;top:1787.3px;font-size:30.5px;color:#5b7693;font-weight:bold;letter-spacing:1.2px;-webkit-text-stroke:.4px #5b7693;text-decoration-thickness:3.2px;text-underline-offset:1.6px">0</div>
<div class="a" style="left:194.0px;top:1996.4px;width:162.0px;height:2.1px;background:#dedede"></div>
<div class="a" style="left:356.0px;top:1998.4px;width:386.0px;height:2.1px;background:#dedede"></div>
<div class="a" style="left:742.0px;top:1996.4px;width:2386.0px;height:2.1px;background:#dedede"></div>
<svg class="a" style="left:222.7px;top:1906.0px" width="53.33" height="53.33" viewBox="0 0 24 24"><path fill="#676767" d="M19 5v14H5V5h14m0-2H5c-1.1 0-2 .9-2 2v14c0 1.1.9 2 2 2h14c1.1 0 2-.9 2-2V5c0-1.1-.9-2-2-2z"/></svg>
<div class="t u" style="left:401.1px;top:1917.6px;font-size:29.5px;color:#2d4373;font-weight:normal;-webkit-text-stroke:.3px #2d4373">Example Company 1</div>
<div class="t " style="left:860.0px;top:1915.6px;font-size:29.3px;color:#444;font-weight:normal;-webkit-text-stroke:.3px #444">00012345678</div>
<div class="bd" style="left:1213px;top:1906.2px;width:118px;background:#98dbe8"></div>
<div class="t " style="left:1246.0px;top:1921.1px;font-size:24px;color:#1f5865;font-weight:normal;letter-spacing:0px;-webkit-text-stroke:.3px #1f5865;transform:scaleX(.92);transform-origin:0 0">NEW</div>
<div class="t " style="left:1646.5px;top:1916.8px;font-size:31px;color:#222;font-weight:normal;letter-spacing:0.05px;-webkit-text-stroke:.3px #222">1969-12-31 17:00</div>
<div class="t " style="left:2084.0px;top:1930.5px;font-size:29.3px;color:#4c4c4c;font-weight:normal;-webkit-text-stroke:.3px #4c4c4c">Jon Eample</div>
<div class="t " style="left:2414.5px;top:1930.5px;font-size:29.3px;color:#4c4c4c;font-weight:normal;-webkit-text-stroke:.3px #4c4c4c">Bizz 1</div>
<div class="t " style="left:2615.3px;top:1930.3px;font-size:29.5px;color:#4c4c4c;font-weight:normal;-webkit-text-stroke:.3px #4c4c4c">Div 1</div>
<div class="t u" style="left:2846.0px;top:1917.3px;font-size:30.5px;color:#5b7693;font-weight:bold;letter-spacing:1.2px;-webkit-text-stroke:.4px #5b7693;text-decoration-thickness:3.2px;text-underline-offset:1.6px">1</div>
<div class="a" style="left:784.0px;top:957.5px;width:293.0px;height:6.0px;background:#fff"></div>
<div class="a" style="left:372.0px;top:1606.0px;width:295.0px;height:8.0px;background:#fff"></div>
<div class="a" style="left:356.0px;top:2134.0px;width:386.0px;height:5.0px;background:#fff"></div>
<div class="a" style="left:356.0px;top:2139.0px;width:386.0px;height:2.0px;background:#dcdcde"></div>
<div class="a" style="left:194.0px;top:2020.7px;width:162.0px;height:2.0px;background:#dedede"></div>
<div class="a" style="left:356.0px;top:2022.7px;width:386.0px;height:2.0px;background:#dedede"></div>
<div class="a" style="left:742.0px;top:2020.7px;width:2386.0px;height:2.0px;background:#dedede"></div>
<div class="t " style="left:2077.5px;top:2062.8px;font-size:31.5px;color:#3a4556;font-weight:normal;letter-spacing:1.05px;-webkit-text-stroke:.3px #3a4556">20 rows</div>
<svg class="a" style="left:2193.6px;top:2053.3px" width="53.33" height="53.33" viewBox="0 0 24 24"><path fill="#3a4556" d="M7 10l5 5 5-5z"/></svg>
<div class="t " style="left:2335.0px;top:2061.3px;font-size:31.5px;color:#222;font-weight:normal;-webkit-text-stroke:.3px #222">1-20 of 115</div>
<div class="a" style="left:2558.0px;top:2051.3px;width:68.5px;height:56.0px;border:2px solid #dcdcdc;border-radius:9px;box-sizing:border-box"></div>
<svg class="a" style="left:2575px;top:2059px" width="40" height="40" viewBox="0 0 40 40" fill="none" stroke="#bdbdbd" stroke-width="3.2"><path d="M23.8 8.5L11 20.4L23.8 32.3"/></svg>
<div class="t " style="left:2640.0px;top:2063.6px;font-size:31px;color:#222;font-weight:normal;letter-spacing:.3px;-webkit-text-stroke:.3px #222">Page</div>
<div class="a" style="left:2727.0px;top:2051.3px;width:100.2px;height:56.0px;border:2px solid #c4c4c4;border-radius:10px;box-sizing:border-box"></div>
<div class="t " style="left:2756.5px;top:2063.6px;font-size:31px;color:#3a4556;font-weight:normal;">1</div>
<div class="t " style="left:2841.5px;top:2062.7px;font-size:32px;color:#222;font-weight:normal;letter-spacing:.8px;-webkit-text-stroke:.3px #222">of 6</div>
<div class="a" style="left:2911.7px;top:2051.3px;width:68.7px;height:56.0px;border:2px solid #c4c4c4;border-radius:9px;box-sizing:border-box"></div>
<svg class="a" style="left:2925px;top:2059px" width="40" height="40" viewBox="0 0 40 40" fill="none" stroke="#3a4556" stroke-width="3.4"><path d="M14.2 9L26.6 20.7L14.2 32.4"/></svg>
<div class="c" style="left:263.7px;top:377.1px">1</div>
<div class="c" style="left:668.9px;top:377.1px">2</div>
<div class="c" style="left:668.9px;top:577.8px">3</div>
<div class="c" style="left:1048.7px;top:577.8px">4</div>
<div class="c" style="left:2227.5px;top:270.0px">5</div>
<div class="c" style="left:2401.1px;top:85.0px">6</div>
<div class="c" style="left:2815.1px;top:84.1px">7</div>
<div class="c" style="left:2784.7px;top:358.7px">8</div>
<div class="c" style="left:2909.5px;top:358.7px">9</div>
<div class="c" style="left:3033.2px;top:358.7px">10</div>
<div class="c" style="left:1958.2px;top:1983.0px">11</div>
<div class="c" style="left:2474.2px;top:1983.0px">12</div>
</body></html>
